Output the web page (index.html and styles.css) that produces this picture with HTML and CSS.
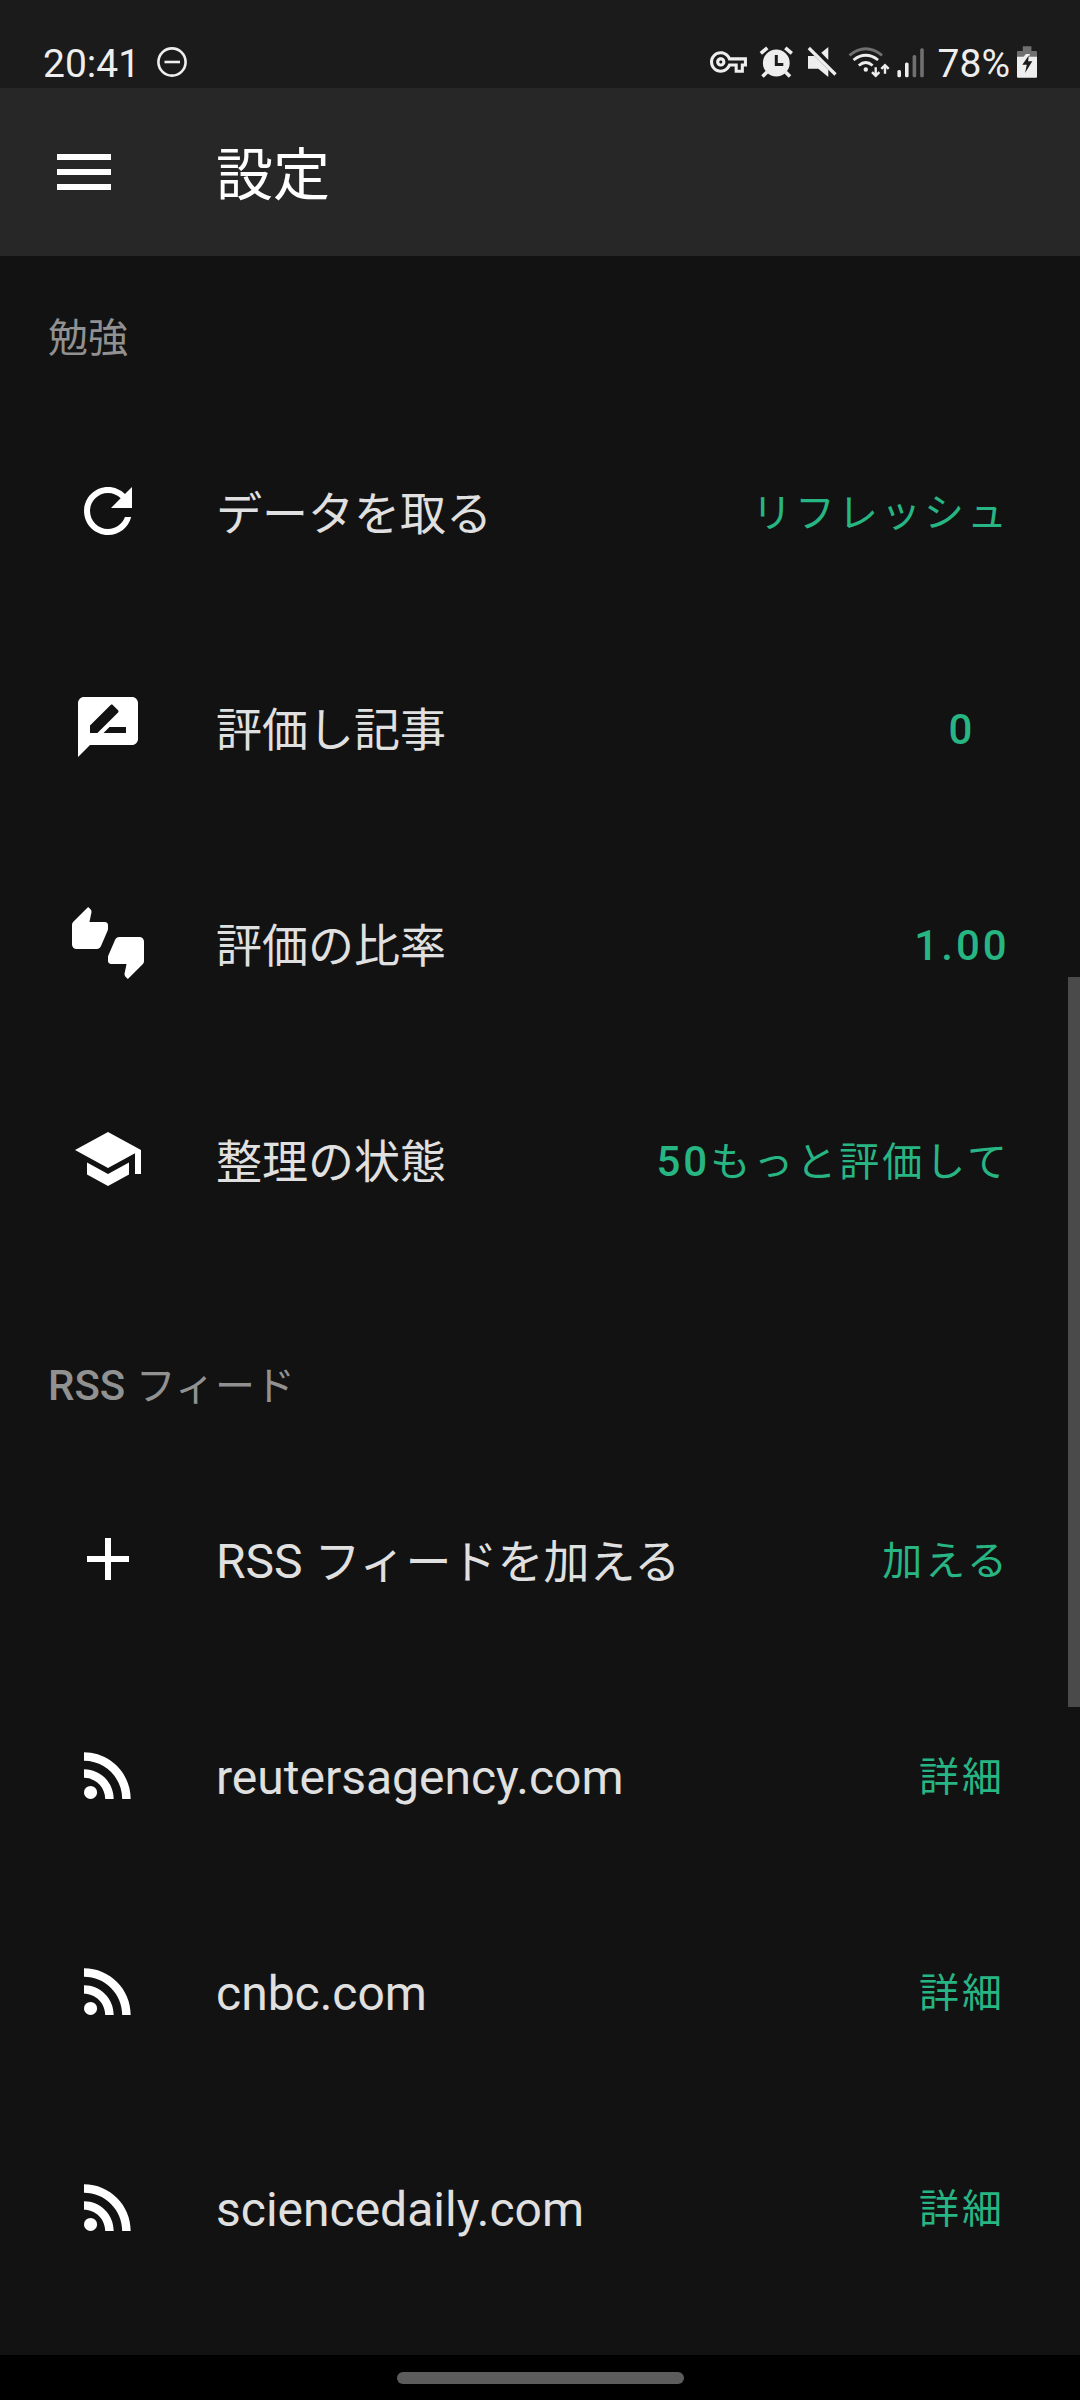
FILE: index.html
```html
<!DOCTYPE html>
<html lang="ja">
<head>
<meta charset="utf-8">
<meta name="viewport" content="width=device-width, initial-scale=1">
<title>設定</title>
<link rel="stylesheet" href="styles.css">
</head>
<body>
<svg class="sprite" aria-hidden="true">
  <symbol id="rss" viewBox="0 0 24 24"><circle cx="6.18" cy="17.82" r="2.18"/><path d="M4 4.44v2.83c7.03 0 12.73 5.7 12.73 12.73h2.83c0-8.59-6.97-15.56-15.56-15.56zm0 5.66v2.83c3.9 0 7.07 3.17 7.07 7.07h2.83c0-5.47-4.43-9.9-9.9-9.9z"/></symbol>
</svg>

<div class="status-bar">
  <div class="status-left">
    <span>20:41</span>
    <svg width="34" height="47" viewBox="0 0 34 47" fill="none" stroke="currentColor" stroke-width="2.6"><circle cx="17" cy="21" r="13.6"/><path d="M9.5 21h15.500"/></svg>
  </div>
  <div class="status-right">
    <svg width="44" height="47" viewBox="0 0 44 47"><path transform="translate(2 2.500) scale(1.54)" d="M22 19h-6v-4h-2.680c-1.140 2.420-3.600 4-6.320 4-3.860 0-7-3.140-7-7s3.140-7 7-7c2.720 0 5.170 1.580 6.320 4H24v6h-2v4zm-4-2h2v-4h2v-2H11.940l-.230-.670C11.010 8.340 9.110 7 7 7c-2.760 0-5 2.240-5 5s2.240 5 5 5c2.110 0 4.010-1.340 4.710-3.330l.230-.670H18v4zM7 15c-1.650 0-3-1.350-3-3s1.350-3 3-3 3 1.350 3 3-1.350 3-3 3zm0-4c-.55 0-1 .45-1 1s.45 1 1 1 1-.45 1-1-.45-1-1-1z"/></svg>
    <svg width="42" height="47" viewBox="0 0 42 47"><circle cx="18.300" cy="22" r="13.400"/><path d="M18.300 14v9.500h7" fill="none" stroke="#1b1b1b" stroke-width="3"/><path d="M2.800 12.300l6.500-5.500M27.300 6.800l6.500 5.500M9 31l-4.500 4.500M27.500 31l4.500 4.500" fill="none" stroke="currentColor" stroke-width="3.600"/></svg>
    <svg width="36" height="47" viewBox="0 0 36 47"><path d="M15.300 11.800L22.300 6v13zM2 15h6.500l13.800 13.800V36L12.300 27.800H2z"/><path d="M2.800 7l26.700 26.500" fill="none" stroke="currentColor" stroke-width="3.200"/></svg>
    <svg width="42" height="47" viewBox="0 0 42 47" fill="none" stroke="currentColor" stroke-width="2.800"><path class="dim" d="M1.500 14.300q16.200-13 32.600 0"/><path d="M5.500 19q12.200-9.500 24.600 0M10.800 24.500q7-6 13.800 0"/><circle cx="17.800" cy="28.500" r="2.200" fill="currentColor" stroke="none"/><path stroke-width="2.400" d="M27.700 26.200v8.600M24 31.200l3.700 3.700 3.700-3.700M37 32.800v-8.600M33.300 27.800l3.700-3.700 3.700 3.700"/></svg>
    <svg width="36" height="47" viewBox="0 0 36 47"><rect x="1.400" y="29" width="3.600" height="7.300" rx="1.500"/><rect x="9" y="21.500" width="3.600" height="14.800" rx="1.500"/><g class="dim-fill"><rect x="16.600" y="14" width="3.600" height="22.300" rx="1.500"/><rect x="24.200" y="7.300" width="3.600" height="29" rx="1.500"/></g></svg>
    <span>78%</span>
    <svg width="22" height="47" viewBox="0 0 22 47"><path class="dim-fill" d="M6.800 5.300h8.600V10H20q1 0 1 1v5H1v-5q0-1 1-1h4.800z"/><path d="M1 15.700h6.500l2.500-2.700h4l-1 2.700h8v20q0 1-1 1H2q-1 0-1-1z"/><path fill="#1b1b1b" d="M12.800 14.500L6.300 23.800h4.500L9 32l7.300-11.700h-4.200z"/></svg>
  </div>
</div>

<header class="app-bar">
  <button class="menu-button" type="button" aria-label="メニュー">
    <svg class="icon" viewBox="0 0 24 24"><path d="M3 18h18v-2H3v2zm0-5h18v-2H3v2zm0-7v2h18V6H3z"/></svg>
  </button>
  <h1 class="title">設定</h1>
</header>

<main class="content">
  <section class="group">
    <h2 class="group-title">勉強</h2>
    <ul class="rows">
      <li class="row">
        <svg class="icon" viewBox="0 0 24 24"><path d="M17.650 6.350C16.200 4.900 14.210 4 12 4c-4.420 0-7.990 3.580-7.990 8s3.570 8 7.990 8c3.730 0 6.840-2.550 7.730-6h-2.080c-.82 2.330-3.040 4-5.650 4-3.310 0-6-2.690-6-6s2.690-6 6-6c1.660 0 3.140.69 4.220 1.780L13 11h7V4l-2.350 2.350z"/></svg>
        <span class="label">データを取る</span>
        <button class="action" type="button">リフレッシュ</button>
      </li>
      <li class="row">
        <svg class="icon" viewBox="0 0 24 24"><path d="M20 2H4c-1.100 0-1.990.9-1.990 2L2 22l4-4h14c1.100 0 2-.9 2-2V4c0-1.100-.9-2-2-2zM6 14v-2.470l6.880-6.880c.2-.2.510-.2.710 0l1.770 1.770c.2.2.2.510 0 .710L8.470 14H6zm12 0h-7.500l2-2H18v2z"/></svg>
        <span class="label">評価し記事</span>
        <button class="action" type="button"><span class="strong">0</span></button>
      </li>
      <li class="row">
        <svg class="icon" viewBox="0 0 24 24"><path d="M12 6c0-.55-.45-1-1-1H5.820l.66-3.180.02-.23c0-.31-.13-.59-.33-.8L5.380 0 .44 4.940C.17 5.210 0 5.590 0 6v6.500c0 .83.67 1.500 1.500 1.500h6.750c.62 0 1.150-.38 1.380-.91l2.260-5.290c.07-.17.11-.36.11-.55V6zm10.500 4h-6.750c-.62 0-1.150.38-1.380.91l-2.260 5.290c-.07.17-.11.36-.11.55V18c0 .55.45 1 1 1h5.180l-.66 3.180-.02.24c0 .31.13.59.33.8l.79.78 4.940-4.940c.27-.27.44-.65.44-1.060v-6.500c0-.83-.67-1.500-1.500-1.500z"/></svg>
        <span class="label">評価の比率</span>
        <button class="action" type="button"><span class="strong">1.00</span></button>
      </li>
      <li class="row">
        <svg class="icon" viewBox="0 0 24 24"><path d="M5 13.180v4L12 21l7-3.820v-4L12 17l-7-3.820zM12 3L1 9l11 6 9-4.910V17h2V9L12 3z"/></svg>
        <span class="label">整理の状態</span>
        <button class="action" type="button"><span class="strong">50</span>もっと評価して</button>
      </li>
    </ul>
  </section>

  <section class="group">
    <h2 class="group-title"><span class="strong">RSS </span>フィード</h2>
    <ul class="rows">
      <li class="row">
        <svg class="icon" viewBox="0 0 24 24"><path d="M19 13h-6v6h-2v-6H5v-2h6V5h2v6h6v2z"/></svg>
        <span class="label"><span class="latin">RSS </span>フィードを加える</span>
        <button class="action" type="button">加える</button>
      </li>
      <li class="row">
        <svg class="icon"><use href="#rss"/></svg>
        <span class="label latin">reutersagency.com</span>
        <button class="action" type="button">詳細</button>
      </li>
      <li class="row">
        <svg class="icon"><use href="#rss"/></svg>
        <span class="label latin">cnbc.com</span>
        <button class="action" type="button">詳細</button>
      </li>
      <li class="row">
        <svg class="icon"><use href="#rss"/></svg>
        <span class="label latin">sciencedaily.com</span>
        <button class="action" type="button">詳細</button>
      </li>
    </ul>
  </section>
  <div class="scroll-thumb"></div>
</main>

<footer class="nav-bar"><div class="nav-handle"></div></footer>
</body>
</html>
```

FILE: styles.css
```css
* {
  box-sizing: border-box;
}

body {
  margin: 0;
  min-height: 100vh;
  display: flex;
  flex-direction: column;
  background: #121212;
  color: #e0e0e0;
  font-family: Roboto, "Noto Sans CJK JP", sans-serif;
  font-weight: 400;
}

svg {
  display: block;
  flex: none;
  fill: currentColor;
}

svg[fill="none"] {
  fill: none;
}

.sprite {
  position: absolute;
  width: 0;
  height: 0;
}

.status-bar {
  display: flex;
  justify-content: space-between;
  padding: 41px 42px 0 43px;
  background: #1b1b1b;
  color: #eeeeee;
  font-size: 39px;
  line-height: 47px;
}

.status-left,
.status-right {
  display: flex;
}

.status-left {
  gap: 15px;
}

.status-right {
  gap: 6px;
}

.dim {
  stroke: #707070;
}

.dim-fill {
  fill: #707070;
}

.app-bar {
  display: flex;
  align-items: center;
  gap: 96px;
  height: 168px;
  padding: 0 48px;
  background: #272727;
  color: #ffffff;
}

.menu-button {
  padding: 0;
  border: 0;
  background: none;
  color: inherit;
}

.icon {
  width: 72px;
  height: 72px;
  color: #ffffff;
}

.title {
  margin: 0;
  padding-top: 8px;
  font-size: 57px;
  line-height: 72px;
  font-weight: 400;
}

.content {
  position: relative;
  flex: 1;
  padding-top: 15px;
}

.group + .group {
  margin-top: 51px;
}

.group-title {
  margin: 0;
  padding: 4px 48px 0;
  color: #919191;
  font-size: 40px;
  line-height: 128px;
  font-weight: 400;
}

/* Latin text runs slightly larger than the kana and kanji beside it */
.strong {
  font-size: 42px;
  font-weight: 500;
}

.rows {
  margin: 0;
  padding: 0;
  list-style: none;
}

.row {
  display: flex;
  align-items: center;
  gap: 72px;
  height: 216px;
  padding: 0 46px 0 72px;
}

.label {
  flex: 1;
  padding-top: 6px;
  font-size: 46px;
  line-height: 72px;
}

.latin {
  font-size: 48px;
}

.action {
  min-width: 144px;
  padding: 6px 24px 0;
  border: 0;
  background: none;
  color: #27b583;
  font: inherit;
  font-size: 40px;
  line-height: 108px;
  letter-spacing: 3px;
}

.scroll-thumb {
  position: absolute;
  top: 721px;
  right: 0;
  width: 12px;
  height: 730px;
  background: #4a4a4a;
}

.nav-bar {
  display: flex;
  justify-content: center;
  align-items: center;
  height: 45px;
  background: #000000;
}

.nav-handle {
  width: 287px;
  height: 12px;
  border-radius: 6px;
  background: #5c5c5c;
}
```
